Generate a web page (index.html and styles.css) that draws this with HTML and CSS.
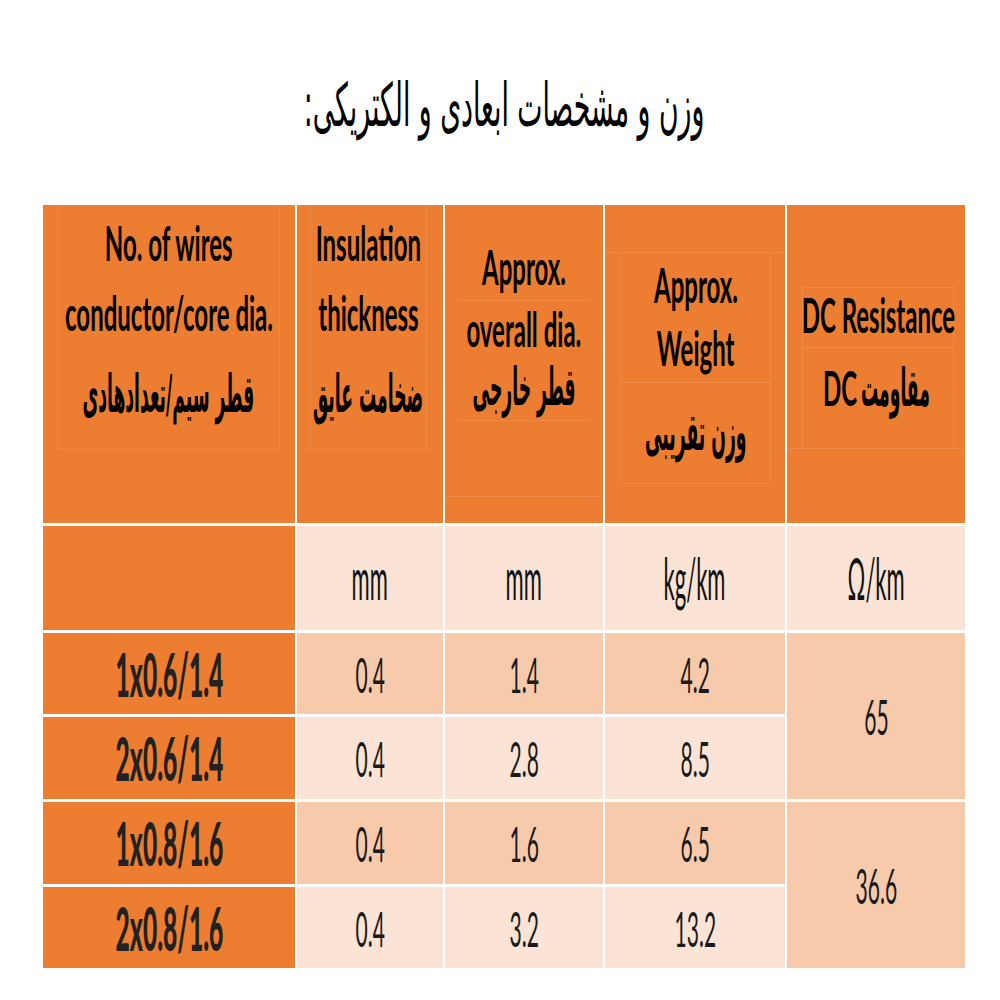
FILE: index.html
```html
<!DOCTYPE html>
<html lang="fa">
<head>
<meta charset="utf-8">
<title>وزن و مشخصات ابعادی و الکتریکی</title>
<link rel="stylesheet" href="styles.css">
</head>
<body>
<h1 class="title" dir="rtl"><span class="title-text">وزن و مشخصات ابعادی و الکتریکی:</span></h1>

<div class="table">
  <!-- header row -->
  <div class="cell hd">
    <div class="frame frame-1">
      <div class="ln en l70">No. of wires</div>
      <div class="ln en l70">conductor/core dia.</div>
      <div class="ln fa fa-1" dir="rtl">قطر سیم/تعدادهادی</div>
    </div>
  </div>
  <div class="cell hd">
    <div class="frame frame-2">
      <div class="ln en l70">Insulation</div>
      <div class="ln en l70">thickness</div>
      <div class="ln fa fa-1" dir="rtl">ضخامت عایق</div>
    </div>
  </div>
  <div class="cell hd">
    <div class="sec3-top">
      <div class="ln en l61">Approx.</div>
    </div>
    <div class="sec3-mid">
      <div class="ln en l56">overall dia.</div>
      <div class="ln fa fa-3" dir="rtl">قطر خارجی</div>
    </div>
    <div class="sec3-rule"></div>
  </div>
  <div class="cell hd">
    <div class="sec4-rule"></div>
    <div class="box4">
      <div class="box4-top">
        <div class="ln en l63">Approx.</div>
        <div class="ln en l63">Weight</div>
      </div>
      <div class="box4-bot">
        <div class="ln fa" dir="rtl">وزن تقریبی</div>
      </div>
    </div>
  </div>
  <div class="cell hd">
    <div class="box5">
      <div class="box5-top">
        <div class="ln en l54">DC Resistance</div>
      </div>
      <div class="box5-bot">
        <div class="mix" dir="rtl">
          <span class="mix-part mix-fa"><span class="fa-in">مقاومت</span></span>
          <span class="mix-part mix-en"><span class="en-in">DC</span></span>
        </div>
      </div>
    </div>
    <div class="sec5-rule"></div>
  </div>

  <!-- units row -->
  <div class="cell orange"></div>
  <div class="cell light"><span class="ln unit">mm</span></div>
  <div class="cell light"><span class="ln unit">mm</span></div>
  <div class="cell light"><span class="ln unit">kg/km</span></div>
  <div class="cell light"><span class="ln unit">Ω/km</span></div>

  <!-- data row 1 -->
  <div class="cell orange"><span class="ln code">1x0.6/1.4</span></div>
  <div class="cell mid"><span class="ln val">0.4</span></div>
  <div class="cell mid"><span class="ln val">1.4</span></div>
  <div class="cell mid"><span class="ln val">4.2</span></div>
  <div class="cell mid span2"><span class="ln val">65</span></div>

  <!-- data row 2 -->
  <div class="cell orange"><span class="ln code">2x0.6/1.4</span></div>
  <div class="cell light"><span class="ln val">0.4</span></div>
  <div class="cell light"><span class="ln val">2.8</span></div>
  <div class="cell light"><span class="ln val">8.5</span></div>

  <!-- data row 3 -->
  <div class="cell orange"><span class="ln code">1x0.8/1.6</span></div>
  <div class="cell mid"><span class="ln val">0.4</span></div>
  <div class="cell mid"><span class="ln val">1.6</span></div>
  <div class="cell mid"><span class="ln val">6.5</span></div>
  <div class="cell mid span2"><span class="ln val">36.6</span></div>

  <!-- data row 4 -->
  <div class="cell orange"><span class="ln code">2x0.8/1.6</span></div>
  <div class="cell light"><span class="ln val">0.4</span></div>
  <div class="cell light"><span class="ln val">3.2</span></div>
  <div class="cell light"><span class="ln val">13.2</span></div>
</div>
</body>
</html>
```

FILE: styles.css
```css
html, body {
  margin: 0;
  padding: 0;
  background: #ffffff;
}

body {
  font-family: "Lato", "DejaVu Sans", sans-serif;
  color: #000;
}

.title {
  margin: 55px 0 50px 0;
  padding-left: 8px;
  height: 100px;
  display: flex;
  justify-content: center;
  align-items: center;
  font-family: "DejaVu Sans", sans-serif;
  font-weight: normal;
  font-size: 60px;
  line-height: 100px;
}

.title-text {
  display: inline-block;
  white-space: nowrap;
  transform: scaleX(0.445);
}

.table {
  margin-left: 43px;
  width: 922px;
  display: grid;
  grid-template-columns: 252px 146px 158px 180px 178px;
  grid-template-rows: 318px 104px 81px 82px 82px 81px;
  column-gap: 2px;
  row-gap: 3px;
}

.cell {
  display: flex;
  flex-direction: column;
  align-items: center;
  justify-content: center;
  min-width: 0;
}

.hd {
  background: #ED7D31;
  justify-content: flex-start;
  align-items: stretch;
}

.orange { background: #ED7D31; }
.light  { background: #FBE4D5; }
.mid    { background: #F7CAAC; }
.span2  { grid-row: span 2; }

.ln {
  display: block;
  white-space: nowrap;
  transform-origin: center center;
}

/* header english text */
.en {
  font-weight: 700;
  font-size: 48px;
  transform: scaleX(0.5);
}
.l70 { line-height: 70px; }
.l61 { line-height: 61px; }
.l56 { line-height: 56px; }
.l63 { line-height: 63px; }
.l54 { line-height: 54px; }

/* header persian text */
.fa {
  font-family: "DejaVu Sans", sans-serif;
  font-weight: 700;
  font-size: 52px;
  line-height: 60px;
  transform: scaleX(0.33);
}

/* frames (faint inner lines of the original table) */
.frame {
  display: flex;
  flex-direction: column;
  align-items: center;
  height: 245px;
  box-sizing: border-box;
  padding-top: 3px;
  border: 1px solid rgba(255, 255, 255, 0.1);
  border-top: 0;
}
.frame-1 { margin: 0 15px 0 14px; }
.frame-2 { margin: 0 16px 0 13px; }
.fa-1 { margin-top: 16px; }

/* column 3 header */
.sec3-top {
  display: flex;
  flex-direction: column;
  align-items: center;
  height: 95px;
  box-sizing: border-box;
  padding-top: 31px;
}
.sec3-mid {
  display: flex;
  flex-direction: column;
  align-items: center;
  margin: 0 14px;
  height: 121px;
  box-sizing: border-box;
  border-top: 1px solid rgba(255, 255, 255, 0.12);
  border-bottom: 1px solid rgba(255, 255, 255, 0.12);
}
.fa-3 { margin-top: 0; }
.sec3-rule {
  margin-top: 75px;
  border-top: 1px solid rgba(255, 255, 255, 0.08);
}

/* column 4 header */
.sec4-rule {
  margin-top: 47px;
  border-top: 1px solid rgba(255, 255, 255, 0.12);
}
.box4 {
  margin: 0 14px 0 15px;
  height: 230px;
  display: flex;
  flex-direction: column;
  border-left: 1px solid rgba(255, 255, 255, 0.1);
  border-right: 1px solid rgba(255, 255, 255, 0.1);
  border-bottom: 1px solid rgba(255, 255, 255, 0.1);
}
.box4-top {
  height: 130px;
  box-sizing: border-box;
  display: flex;
  flex-direction: column;
  align-items: center;
  border-bottom: 1px solid rgba(255, 255, 255, 0.12);
}
.box4-bot {
  display: flex;
  flex-direction: column;
  align-items: center;
  padding-top: 19px;
}

/* column 5 header */
.box5 {
  margin: 82px 11px 0 15px;
  height: 161px;
  display: flex;
  flex-direction: column;
  border: 1px solid rgba(255, 255, 255, 0.1);
  border-bottom: 0;
  box-sizing: border-box;
}
.box5-top {
  height: 60px;
  box-sizing: border-box;
  display: flex;
  flex-direction: column;
  align-items: center;
  border-bottom: 1px solid rgba(255, 255, 255, 0.12);
}
.box5-bot {
  display: flex;
  flex-direction: column;
  align-items: center;
  padding-top: 10px;
}
.sec5-rule {
  border-top: 1px solid rgba(255, 255, 255, 0.1);
}
.mix {
  display: flex;
  align-items: baseline;
  justify-content: center;
  gap: 8px;
  font-weight: 700;
  line-height: 60px;
  height: 60px;
}
.mix-part {
  display: flex;
  justify-content: center;
  white-space: nowrap;
}
.mix-fa { width: 67px; }
.mix-en { width: 27px; }
.fa-in {
  display: block;
  flex: none;
  font-family: "DejaVu Sans", sans-serif;
  font-size: 52px;
  transform: scaleX(0.33);
}
.en-in {
  display: block;
  flex: none;
  font-family: "Lato", sans-serif;
  font-size: 48px;
  transform: scaleX(0.5);
}

/* body text */
.unit {
  font-size: 58px;
  line-height: 70px;
  color: #111;
  transform: scaleX(0.38);
}
.val {
  font-size: 49px;
  line-height: 60px;
  color: #1a1a1a;
  transform: scaleX(0.43);
}
.code {
  font-size: 60px;
  font-weight: 900;
  line-height: 70px;
  color: #222;
  transform: scaleX(0.41);
}
```
